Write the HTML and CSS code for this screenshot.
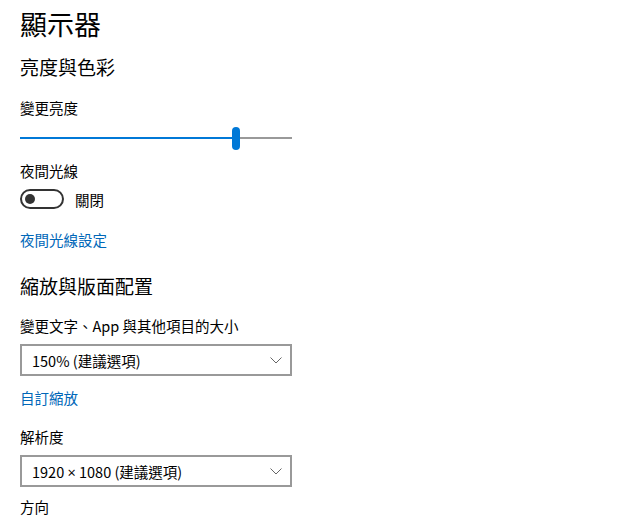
FILE: index.html
```
<!DOCTYPE html>
<html lang="zh-Hant">
<head>
    <meta charset="UTF-8">
    <meta name="viewport" content="width=device-width, initial-scale=1.0">
    <title>顯示器</title>
    <link rel="stylesheet" href="styles.css">
</head>
<body>

<div class="page">
    <h1 class="page-title">顯示器</h1>

    <h2 class="section-title">亮度與色彩</h2>
    <div class="label">變更亮度</div>
    <div class="slider">
        <div class="slider-fill" style="width: 212px;"></div>
        <div class="slider-thumb"></div>
        <div class="slider-rest"></div>
    </div>

    <div class="label label-night">夜間光線</div>
    <div class="toggle-row">
        <div class="toggle"><span class="toggle-knob"></span></div>
        <span class="toggle-text">關閉</span>
    </div>
    <a class="link link-night" href="#">夜間光線設定</a>

    <h2 class="section-title section-scale">縮放與版面配置</h2>
    <div class="label label-size">變更文字、App 與其他項目的大小</div>
    <div class="select">
        <span>150% (建議選項)</span>
        <svg class="chevron" width="12" height="7" viewBox="0 0 12 7"><path d="M0.5 0.5 L6 6 L11.5 0.5" fill="none" stroke="#666" stroke-width="1"/></svg>
    </div>
    <a class="link link-custom" href="#">自訂縮放</a>

    <div class="label label-res">解析度</div>
    <div class="select">
        <span>1920 <span class="times">×</span> 1080 (建議選項)</span>
        <svg class="chevron" width="12" height="7" viewBox="0 0 12 7"><path d="M0.5 0.5 L6 6 L11.5 0.5" fill="none" stroke="#666" stroke-width="1"/></svg>
    </div>
    <div class="label label-dir">方向</div>
</div>

</body>
</html>
```

FILE: styles.css
```
body {
    margin: 0;
    background: #fff;
    color: #000;
    font-family: "Noto Sans CJK TC", "Noto Sans", sans-serif;
}
.page {
    padding: 6px 20px 0 20px;
    width: 272px;
}
.page-title {
    font-size: 27px;
    font-weight: 400;
    line-height: 36px;
    margin: 0;
}
.section-title {
    font-size: 19px;
    font-weight: 400;
    line-height: 28px;
    margin: 11px 0 0 0;
}
.section-scale {
    margin-top: 22px;
}
.label {
    font-size: 14.5px;
    line-height: 20px;
    margin-top: 17px;
}
.label-night {
    margin-top: 11px;
}
.label-size {
    margin-top: 16px;
}
.label-res {
    margin-top: 19px;
}
.label-dir {
    margin-top: 10px;
}
.slider {
    display: flex;
    align-items: center;
    height: 24px;
    margin-top: 8px;
}
.slider-fill {
    height: 2px;
    background: #0078d7;
}
.slider-thumb {
    width: 8px;
    height: 23px;
    border-radius: 4px;
    background: #0078d7;
}
.slider-rest {
    flex: 1;
    height: 2px;
    background: #999;
}
.toggle-row {
    display: flex;
    align-items: center;
    margin-top: 8px;
    height: 20px;
}
.toggle {
    width: 37px;
    height: 16px;
    border: 2px solid #333;
    border-radius: 10px;
    display: flex;
    align-items: center;
    padding-left: 3px;
}
.toggle-knob {
    width: 10px;
    height: 10px;
    border-radius: 50%;
    background: #333;
}
.toggle-text {
    font-size: 14.5px;
    margin-left: 11px;
}
.link {
    display: block;
    color: #0067b8;
    text-decoration: none;
    font-size: 14.5px;
    line-height: 20px;
}
.link-night {
    margin-top: 21px;
}
.link-custom {
    margin-top: 12px;
}
.select {
    display: flex;
    align-items: center;
    justify-content: space-between;
    height: 28px;
    border: 2px solid #999;
    padding: 0 8px 0 10px;
    margin-top: 8px;
    font-size: 14.5px;
}
.times {
    font-family: "Open Sans", sans-serif;
}
```
